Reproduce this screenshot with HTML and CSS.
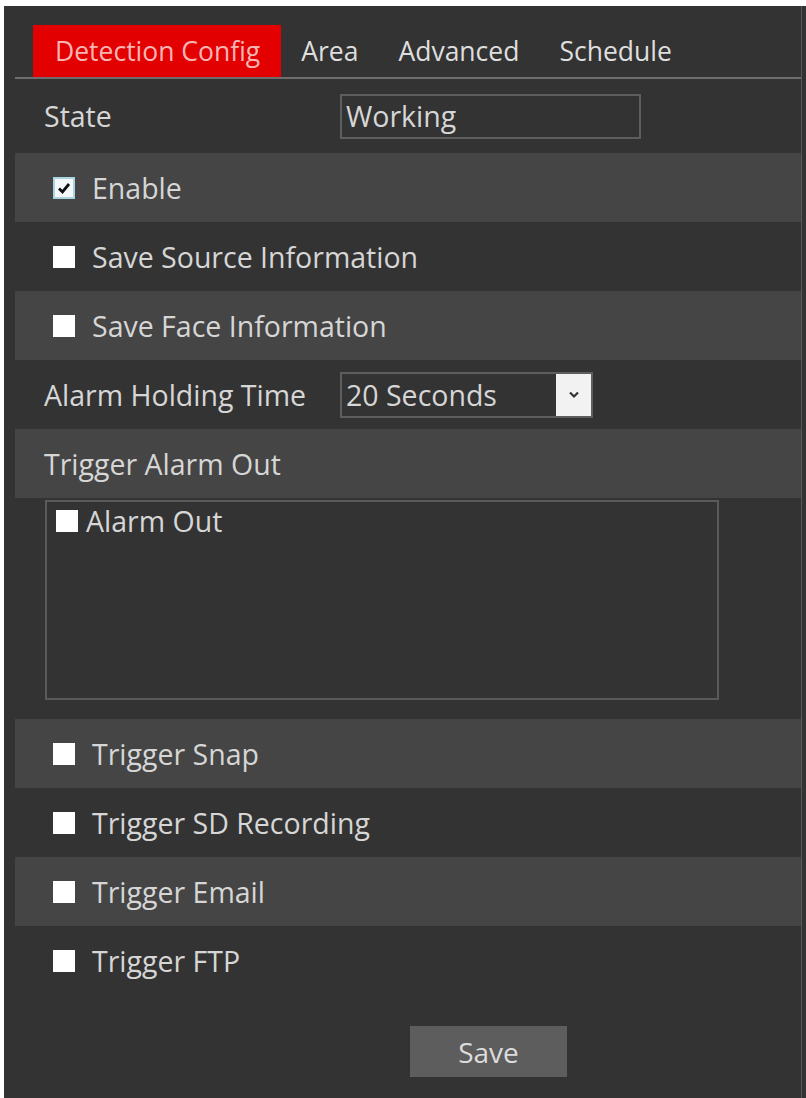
FILE: index.html
```html
<!DOCTYPE html>
<html>
<head>
    <title>Detection Config</title>
    <link rel="stylesheet" href="styles.css">
</head>
<body>
    <div class="panel">
        <div class="sheet">
            <div class="tabs">
                <span class="tab active">Detection Config</span>
                <span class="tab">Area</span>
                <span class="tab">Advanced</span>
                <span class="tab">Schedule</span>
            </div>

            <div class="row field state-row">
                <span class="field-label">State</span>
                <div class="text-box">Working</div>
            </div>

            <div class="row shade check-row">
                <span class="box checked">
                    <svg width="16" height="16" viewBox="0 0 16 16">
                        <path d="M3 8.5 L6.5 12 L13 4" fill="none" stroke="#111" stroke-width="2.8"/>
                    </svg>
                </span>
                <span>Enable</span>
            </div>
            <div class="row check-row">
                <span class="box"></span>
                <span>Save Source Information</span>
            </div>
            <div class="row shade check-row">
                <span class="box"></span>
                <span>Save Face Information</span>
            </div>

            <div class="row field">
                <span class="field-label">Alarm Holding Time</span>
                <div class="select">
                    <span class="select-value">20 Seconds</span>
                    <span class="select-btn">
                        <svg width="12" height="9" viewBox="0 0 12 9">
                            <path d="M2 2.5 L6 6.5 L10 2.5" fill="none" stroke="#333" stroke-width="2.2"/>
                        </svg>
                    </span>
                </div>
            </div>

            <div class="row shade field">
                <span>Trigger Alarm Out</span>
            </div>
            <div class="alarm-area">
                <div class="alarm-list">
                    <div class="alarm-item">
                        <span class="box small"></span>
                        <span>Alarm Out</span>
                    </div>
                </div>
            </div>

            <div class="row shade check-row">
                <span class="box"></span>
                <span>Trigger Snap</span>
            </div>
            <div class="row check-row">
                <span class="box"></span>
                <span>Trigger SD Recording</span>
            </div>
            <div class="row shade check-row">
                <span class="box"></span>
                <span>Trigger Email</span>
            </div>
            <div class="row check-row">
                <span class="box"></span>
                <span>Trigger FTP</span>
            </div>

            <div class="actions">
                <button type="button" class="save-button">Save</button>
            </div>
        </div>
    </div>
</body>
</html>
```

FILE: styles.css
```css
body {
    margin: 0;
    background: #fff;
    font-family: "Open Sans", "Liberation Sans", sans-serif;
    color: #d6d6d6;
}
.panel {
    margin: 6px 0 0 4px;
    min-height: 1092px;
    background: #333;
    padding: 0 4px 0 11px;
    box-sizing: border-box;
}
.sheet {
    min-height: 1092px;
    border-right: 1px solid #575757;
}
.tabs {
    display: flex;
    padding: 19px 0 0 18px;
    border-bottom: 2px solid #6e6e6e;
}
.tab {
    height: 52px;
    padding: 0 20px;
    display: flex;
    align-items: center;
    font-size: 26.5px;
    color: #dedede;
}
.tab.active {
    background: #e30000;
    color: #f6b5b5;
    padding: 0 21px 0 22px;
}
.row {
    height: 69px;
    display: flex;
    align-items: center;
    font-size: 28.5px;
}
.row.shade {
    background: #454545;
}
.field {
    padding-left: 29px;
}
.state-row {
    height: 74px;
}
.field-label {
    width: 296px;
    flex: none;
}
.text-box {
    width: 301px;
    height: 45px;
    border: 2px solid #5e5e5e;
    box-sizing: border-box;
    padding-left: 4px;
    display: flex;
    align-items: center;
}
.check-row {
    padding-left: 38px;
}
.box {
    width: 22px;
    height: 22px;
    background: #fff;
    margin-right: 17px;
    flex: none;
    display: flex;
    align-items: center;
    justify-content: center;
    box-sizing: border-box;
}
.box.checked {
    background: #f4f8fa;
    border: 2px solid #a9d4e4;
}
.select {
    display: flex;
    width: 253px;
    height: 46px;
    border: 2px solid #5e5e5e;
    box-sizing: border-box;
}
.select-value {
    flex: 1;
    display: flex;
    align-items: center;
    padding-left: 4px;
}
.select-btn {
    width: 35px;
    background: #f2f2f2;
    display: flex;
    align-items: center;
    justify-content: center;
}
.alarm-area {
    height: 221px;
    padding: 2px 0 0 30px;
    box-sizing: border-box;
}
.alarm-list {
    width: 674px;
    height: 200px;
    border: 2px solid #5a5a5a;
    box-sizing: border-box;
    padding: 0 9px;
}
.alarm-item {
    display: flex;
    align-items: center;
    font-size: 28.5px;
}
.box.small {
    margin-right: 8px;
}
.actions {
    padding: 31px 0 0 395px;
}
.save-button {
    width: 157px;
    height: 51px;
    background: #5d5d5d;
    color: #dcdcdc;
    border: none;
    font-family: "Open Sans", "Liberation Sans", sans-serif;
    font-size: 28px;
}
```
